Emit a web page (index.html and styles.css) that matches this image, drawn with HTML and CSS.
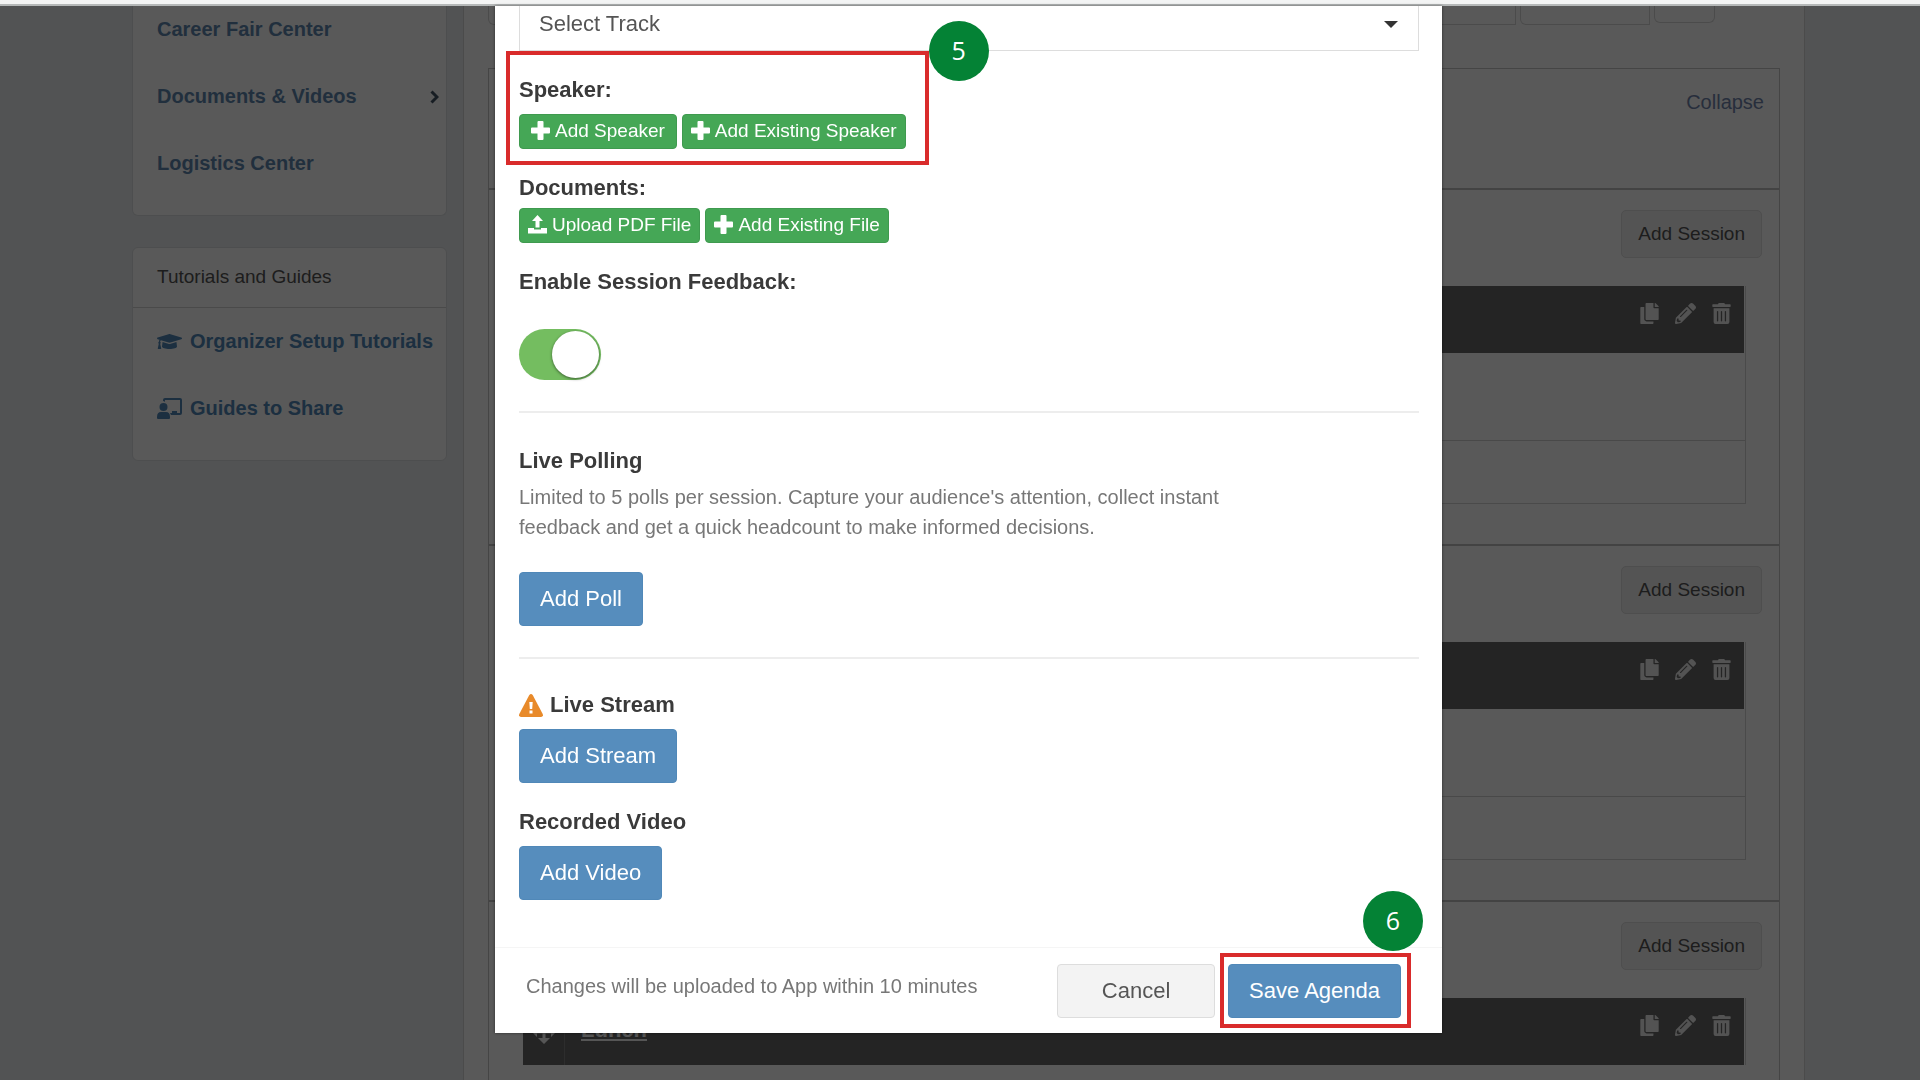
FILE: index.html
```html
<!DOCTYPE html>
<html lang="en">

<head>
	<meta charset="UTF-8">
	<meta name="viewport" content="width=device-width, initial-scale=1.0">
	<title>Agenda Center</title>
	<link rel="stylesheet" href="styles.css">
</head>

<body>

	<!-- shared icons -->
	<svg class="sprite" aria-hidden="true">
		<symbol id="plus" viewBox="0 0 19 19">
			<path d="M7.500 0h4q1 0 1 1v5.500h5.500q1 0 1 1v4q0 1-1 1h-5.500v5.500q0 1-1 1h-4q-1 0-1-1v-5.500H1q-1 0-1-1v-4q0-1 1-1h5.500V1q0-1 1-1z" />
		</symbol>
		<symbol id="upload" viewBox="0 0 19 19">
			<path d="M9.500 0l5.500 6h-3.500v6.500h-4V6H4zM0 13h6v1.500h7V13h6v5.500H0z" />
		</symbol>
		<symbol id="copy" viewBox="0 0 448 512">
			<path d="M320 448v40c0 13.255-10.745 24-24 24H24c-13.255 0-24-10.745-24-24V120c0-13.255 10.745-24 24-24h72v296c0 30.879 25.121 56 56 56h168zm0-344V0H152c-13.255 0-24 10.745-24 24v368c0 13.255 10.745 24 24 24h272c13.255 0 24-10.745 24-24V128H344c-13.200 0-24-10.800-24-24zm120.971-31.029L375.029 7.029A24 24 0 0 0 358.059 0H352v96h96v-6.059a24 24 0 0 0-7.029-16.970z" />
		</symbol>
		<symbol id="pencil" viewBox="0 0 512 512">
			<path d="M497.900 142.100l-46.100 46.100c-4.700 4.700-12.300 4.700-17 0l-111-111c-4.700-4.700-4.700-12.300 0-17l46.100-46.100c18.700-18.700 49.100-18.700 67.900 0l60.100 60.100c18.800 18.700 18.800 49.100 0 67.900zM284.200 99.800L21.600 362.400.4 483.900c-2.900 16.400 11.400 30.600 27.800 27.800l121.500-21.300 262.600-262.600c4.700-4.700 4.700-12.300 0-17l-111-111c-4.800-4.700-12.400-4.700-17.100 0zM124.100 339.900c-5.500-5.500-5.500-14.300 0-19.800l154-154c5.500-5.500 14.300-5.500 19.800 0s5.500 14.300 0 19.800l-154 154c-5.500 5.500-14.300 5.500-19.800 0zM88 424h48v36.300l-64.500 11.300-31.100-31.100L51.700 376H88v48z" />
		</symbol>
		<symbol id="trash" viewBox="0 0 448 512">
			<path d="M32 464a48 48 0 0 0 48 48h288a48 48 0 0 0 48-48V128H32zm272-256a16 16 0 0 1 32 0v224a16 16 0 0 1-32 0zm-96 0a16 16 0 0 1 32 0v224a16 16 0 0 1-32 0zm-96 0a16 16 0 0 1 32 0v224a16 16 0 0 1-32 0zM432 32H312l-9.400-18.700A24 24 0 0 0 281.100 0H166.800a23.720 23.720 0 0 0-21.400 13.300L136 32H16A16 16 0 0 0 0 48v32a16 16 0 0 0 16 16h416a16 16 0 0 0 16-16V48a16 16 0 0 0-16-16z" />
		</symbol>
	</svg>

	<div class="topbar"></div>

	<div class="page">

		<aside class="sidebar">
			<nav class="panel">
				<ul>
					<li><a href="#">Career Fair Center</a></li>
					<li>
						<a href="#">Documents &amp; Videos</a>
						<svg class="chevron" viewBox="0 0 9 14"><path d="M1.500 1.500L7 7l-5.500 5.500" /></svg>
					</li>
					<li><a href="#">Logistics Center</a></li>
				</ul>
			</nav>

			<nav class="panel guides">
				<h4>Tutorials and Guides</h4>
				<ul>
					<li>
						<a href="#">
							<svg viewBox="0 0 640 512"><path d="M622.340 153.200L343.400 67.500c-15.200-4.670-31.600-4.670-46.790 0L17.660 153.200c-23.540 7.230-23.540 38.360 0 45.590l48.630 14.940c-10.670 13.190-17.230 29.280-17.880 46.900C38.780 266.150 32 276.110 32 288c0 10.780 5.680 19.850 13.860 25.650L20.330 428.530C18.110 438.520 25.710 448 35.940 448h56.110c10.240 0 17.840-9.480 15.620-19.470L82.140 313.650C90.320 307.850 96 298.780 96 288c0-11.570-6.470-21.250-15.660-26.870.76-15.020 8.440-28.300 20.690-36.720L296.600 284.500c9.060 2.780 26.440 6.250 46.790 0l278.950-85.700c23.550-7.240 23.550-38.360 0-45.600zM352.790 315.090c-28.530 8.760-52.840 3.920-65.590 0l-145.020-44.550L128 384c0 35.350 85.960 64 192 64s192-28.650 192-64l-14.180-113.470-145.030 44.560z" /></svg>
							Organizer Setup Tutorials
						</a>
					</li>
					<li>
						<a href="#">
							<svg viewBox="0 0 25 21"><path d="M8 0h15q2 0 2 2v13q0 2-2 2h-9l-1-2h2v-2h5v2h3V2H8v2q-1-1-2-1V2q0-2 2-2z" /><circle cx="6.500" cy="9" r="4" /><path d="M4 14h5q4 0 4 5v1q0 1-1 1H1q-1 0-1-1v-1q0-5 4-5z" /></svg>
							Guides to Share
						</a>
					</li>
				</ul>
			</nav>
		</aside>

		<main class="content">

			<div class="filters">
				<input type="text" aria-label="Search">
				<input type="text" class="short" aria-label="Date">
				<button aria-label="Filter"></button>
			</div>

			<div class="agenda">
				<div class="agenda_head"><a href="#">Collapse</a></div>

				<section class="day">
					<button class="add_session">Add Session</button>
					<div class="session">
						<div class="session_head">
							<div class="tools">
								<button aria-label="Copy"><svg class="narrow"><use href="#copy" /></svg></button>
								<button aria-label="Edit"><svg><use href="#pencil" /></svg></button>
								<button aria-label="Delete"><svg class="narrow"><use href="#trash" /></svg></button>
							</div>
						</div>
						<div class="session_time"></div>
						<div class="session_info"></div>
					</div>
				</section>

				<section class="day">
					<button class="add_session">Add Session</button>
					<div class="session">
						<div class="session_head">
							<div class="tools">
								<button aria-label="Copy"><svg class="narrow"><use href="#copy" /></svg></button>
								<button aria-label="Edit"><svg><use href="#pencil" /></svg></button>
								<button aria-label="Delete"><svg class="narrow"><use href="#trash" /></svg></button>
							</div>
						</div>
						<div class="session_time"></div>
						<div class="session_info"></div>
					</div>
				</section>

				<section class="day">
					<button class="add_session">Add Session</button>
					<div class="session">
						<div class="session_head">
							<span class="handle">
								<svg viewBox="0 0 24 24"><path d="M12 0l5 5h-3.500v5.500H19V7l5 5-5 5v-3.500h-5.500V18H18l-6 6-6-6h4.500v-4.500H5V17l-5-5 5-5v3.500h5.500V5H7z" /></svg>
							</span>
							<a href="#" class="session_name">Lunch</a>
							<div class="tools">
								<button aria-label="Copy"><svg class="narrow"><use href="#copy" /></svg></button>
								<button aria-label="Edit"><svg><use href="#pencil" /></svg></button>
								<button aria-label="Delete"><svg class="narrow"><use href="#trash" /></svg></button>
							</div>
						</div>
					</div>
				</section>
			</div>

		</main>
	</div>

	<div class="overlay">
		<div class="modal" role="dialog" aria-label="Agenda session">

			<div class="modal_body">
				<div class="track">
					<select aria-label="Track">
						<option>Select Track</option>
					</select>
				</div>

				<div class="speaker">
					<h4>Speaker:</h4>
					<div class="row">
						<button class="btn_sm wide"><svg><use href="#plus" /></svg>Add Speaker</button>
						<button class="btn_sm"><svg><use href="#plus" /></svg>Add Existing Speaker</button>
					</div>
					<div class="mark"><span class="step">5</span></div>
				</div>

				<div class="documents">
					<h4>Documents:</h4>
					<div class="row">
						<button class="btn_sm"><svg><use href="#upload" /></svg>Upload PDF File</button>
						<button class="btn_sm"><svg><use href="#plus" /></svg>Add Existing File</button>
					</div>
				</div>

				<div class="feedback">
					<h4><label for="feedback">Enable Session Feedback:</label></h4>
					<input type="checkbox" id="feedback" class="switch" checked>
				</div>

				<hr>

				<div class="polling">
					<h4>Live Polling</h4>
					<p>Limited to 5 polls per session. Capture your audience's attention, collect instant feedback and get a quick headcount to make informed decisions.</p>
					<button class="btn">Add Poll</button>
				</div>

				<hr>

				<div class="video">
					<h4>
						<svg viewBox="0 0 24 23"><path class="warn" d="M10.300 1q1.700-2 3.400 0l10 19q1 2.500-1.500 3H1.800Q-.7 22.500.3 20z" /><path class="bang" d="M10.300 8h3.400l-.5 7h-2.400zM10.500 16.500h3v3h-3z" /></svg>
						Live Stream
					</h4>
					<button class="btn">Add Stream</button>
				</div>

				<div class="video">
					<h4>Recorded Video</h4>
					<button class="btn">Add Video</button>
				</div>
			</div>

			<div class="modal_footer">
				<p>Changes will be uploaded to App within 10 minutes</p>
				<button class="btn cancel">Cancel</button>
				<div class="save">
					<button class="btn">Save Agenda</button>
					<div class="mark"><span class="step">6</span></div>
				</div>
			</div>

		</div>
	</div>

</body>

</html>
```

FILE: styles.css
```css
* {
	font-family: "Liberation Sans", Arial, sans-serif;
	box-sizing: border-box;
}

body {
	margin: 0;
	height: 100vh;
	overflow: hidden;
	display: flex;
	flex-direction: column;
	background: #eaedf0;
}

h4,
p,
ul {
	margin: 0;
	padding: 0;
}

ul>li {
	list-style-type: none;
}

a {
	text-decoration: none;
}

button {
	cursor: pointer;
}

.sprite {
	display: none;
}

.topbar {
	flex: none;
	height: 6px;
	background: #f3f4f4;
	border-bottom: 2px solid #b5b8b8;
}

/* page under the dialog */

.page {
	flex: 1;
	min-height: 0;
	overflow: hidden;
	display: flex;
	align-items: flex-start;
	gap: 16px;
	padding: 0 115px 0 132px;
}

.sidebar {
	flex: none;
	width: 315px;
}

.panel {
	background: #fff;
	border: 1px solid #dcdfe2;
	border-top: 0;
	border-radius: 0 0 6px 6px;
	padding-bottom: 18px;
}

.panel li {
	display: flex;
	align-items: center;
	justify-content: space-between;
	height: 67px;
	padding: 0 7px 0 24px;
}

.panel li:first-child {
	height: 57px;
	padding-bottom: 10px;
}

.panel a {
	display: flex;
	align-items: center;
	gap: 8px;
	font-size: 20px;
	font-weight: bold;
	color: #6088b0;
	white-space: nowrap;
}

.panel a svg {
	width: 25px;
	height: 21px;
	fill: currentColor;
}

.chevron {
	width: 9px;
	height: 14px;
	fill: none;
	stroke: #445566;
	stroke-width: 3;
}

.guides {
	margin-top: 31px;
	border-top: 1px solid #dcdfe2;
	border-radius: 6px;
	padding-bottom: 18px;
}

.guides h4 {
	height: 60px;
	padding-left: 24px;
	border-bottom: 1px solid #d4d4d4;
	font-size: 19px;
	font-weight: 400;
	line-height: 57px;
	color: #555;
}

.guides li:first-child {
	height: 67px;
	padding-bottom: 0;
}

.guides a {
	color: #5088b8;
}

.content {
	flex: 1;
	padding: 0 24px;
	background: #fff;
	border: 1px solid #d8d8d8;
	border-width: 0 1px;
}

.filters {
	display: flex;
	align-items: flex-start;
	gap: 4px;
	height: 62px;
	padding-right: 65px;
}

.filters input,
.filters button {
	height: 19px;
	border: 1px solid #d8d8d8;
	border-top: 0;
	background: #fff;
}

.filters input {
	flex: 1;
	border-radius: 0 0 0 6px;
}

.filters .short {
	flex: none;
	width: 130px;
}

.filters button {
	width: 61px;
	height: 17px;
	border-radius: 0 0 6px 6px;
}

.agenda {
	border: 1px solid #c6c6c6;
}

.agenda_head {
	height: 119px;
	padding: 20px 15px 0 0;
	text-align: right;
	font-size: 20px;
	line-height: 26px;
}

.agenda_head a {
	color: #7084ac;
}

.day {
	display: flex;
	flex-direction: column;
	border-top: 2px solid #bfbfbf;
	padding: 20px 17px 40px 34px;
}

.add_session {
	align-self: flex-end;
	height: 48px;
	padding: 0 16px;
	border: 1px solid #dedede;
	border-radius: 5px;
	background: #f0f0f0;
	font-size: 19px;
	color: #555;
}

.session {
	margin: 28px 16px 0 0;
	border-right: 1px solid #d4d4d4;
}

.session_head {
	display: flex;
	height: 67px;
	margin-right: 1px;
	background: #686868;
}

.session_time {
	height: 88px;
	border-bottom: 1px solid #d0d0d0;
}

.session_info {
	height: 63px;
	border-bottom: 1px solid #d4d4d4;
}

.handle {
	display: flex;
	align-items: center;
	justify-content: center;
	width: 42px;
	border-right: 1px solid #808080;
}

.handle svg {
	width: 24px;
	height: 24px;
	fill: #f5f5f5;
}

.session_name {
	padding-left: 16px;
	font-size: 22px;
	font-weight: bold;
	line-height: 64px;
	color: #f5f5f5;
	text-decoration: underline;
}

.tools {
	display: flex;
	gap: 16px;
	margin-left: auto;
	padding: 17px 13px 0 0;
}

.tools button {
	height: 21px;
	padding: 0;
	border: 0;
	background: none;
}

.tools svg {
	display: block;
	width: 21px;
	height: 21px;
	fill: #eee;
}

.tools .narrow {
	width: 19px;
}

/* dialog */

.overlay {
	position: fixed;
	inset: 6px 0 0;
	display: flex;
	align-items: flex-start;
	justify-content: center;
	padding-left: 17px;
	background: rgba(0, 0, 0, 0.65);
}

.modal {
	width: 100%;
	max-width: 947px;
	background: #fff;
	box-shadow: 0 0 3px rgba(0, 0, 0, 0.5);
}

.modal_body {
	padding: 0 23px 47px 24px;
}

.modal h4 {
	font-size: 22px;
	line-height: 30px;
	color: #3a3a3a;
}

.modal hr {
	height: 2px;
	margin: 0;
	border: 0;
	background: #ededed;
}

.track {
	position: relative;
}

.track select {
	display: block;
	appearance: none;
	width: 100%;
	height: 45px;
	padding: 0 19px 10px;
	border: 1px solid #ddd;
	border-top: 0;
	border-radius: 0;
	background: #fff;
	font-size: 22px;
	color: #555;
}

.track::after {
	content: "";
	position: absolute;
	top: 15px;
	right: 21px;
	border: 7px solid transparent;
	border-top-color: #333;
	border-bottom: 0;
}

.row {
	display: flex;
	gap: 5px;
}

.btn_sm {
	display: flex;
	align-items: center;
	gap: 5px;
	height: 35px;
	padding: 0 8px 2px;
	border: 1px solid #3f9a4f;
	border-radius: 4px;
	background: #45a756;
	font-size: 19px;
	color: #fff;
	white-space: nowrap;
}

.btn_sm.wide {
	padding: 0 11px 2px;
}

.btn_sm svg {
	width: 19px;
	height: 19px;
	fill: #fff;
}

.btn {
	height: 54px;
	padding: 0 20px;
	border: 1px solid #5088b8;
	border-radius: 4px;
	background: #568dbd;
	font-size: 22px;
	color: #fff;
	white-space: nowrap;
}

.speaker {
	position: relative;
	width: fit-content;
	margin: 24px 0;
}

.speaker h4 {
	margin-bottom: 9px;
}

.documents h4 {
	margin-bottom: 5px;
}

.feedback {
	margin: 24px 0 31px;
}

/* toggle */
.switch {
	display: block;
	appearance: none;
	width: 82px;
	height: 51px;
	margin: 32px 0 0;
	padding: 2px;
	border-radius: 26px;
	background: #74bd60;
}

.switch::before {
	content: "";
	display: block;
	width: 47px;
	height: 47px;
	margin-left: auto;
	border-radius: 50%;
	background: #fff;
	box-shadow: 0 1px 3px rgba(0, 0, 0, 0.5);
}

.polling {
	margin: 33px 0 31px;
}

.polling p {
	max-width: 740px;
	margin: 6px 0 30px;
	font-size: 20px;
	line-height: 30px;
	color: #777;
}

.video {
	margin-top: 24px;
}

hr+.video {
	margin-top: 31px;
}

.video h4 {
	display: flex;
	align-items: center;
	gap: 7px;
	margin-bottom: 9px;
}

.video svg {
	width: 24px;
	height: 23px;
}

.warn {
	fill: #e88a2a;
}

.bang {
	fill: #fff;
}

.video .btn {
	display: block;
}

.modal_footer {
	display: flex;
	align-items: flex-start;
	padding: 16px 41px 15px 31px;
	border-top: 1px solid #f5f5f5;
}

.modal_footer p {
	flex: 1;
	font-size: 20px;
	line-height: 44px;
	color: #777;
}

.cancel {
	width: 158px;
	margin-right: 13px;
	border-color: #ddd;
	background: #f3f3f3;
	color: #555;
}

.save {
	position: relative;
}

/* numbered marks around the controls */

.mark {
	position: absolute;
	inset: -24px -23px -16px -13px;
	border: 4px solid #d92b2b;
	pointer-events: none;
}

.step {
	position: absolute;
	top: -34px;
	left: calc(100% + 4px);
	width: 60px;
	height: 60px;
	border-radius: 50%;
	background: #048235;
	font-family: "Open Sans", "Noto Sans", sans-serif;
	font-size: 25px;
	line-height: 58px;
	text-align: center;
	color: #fff;
}

.save .mark {
	inset: -11px -10px -10px -8px;
}

.save .step {
	top: -66px;
	left: auto;
	right: -16px;
}
```
